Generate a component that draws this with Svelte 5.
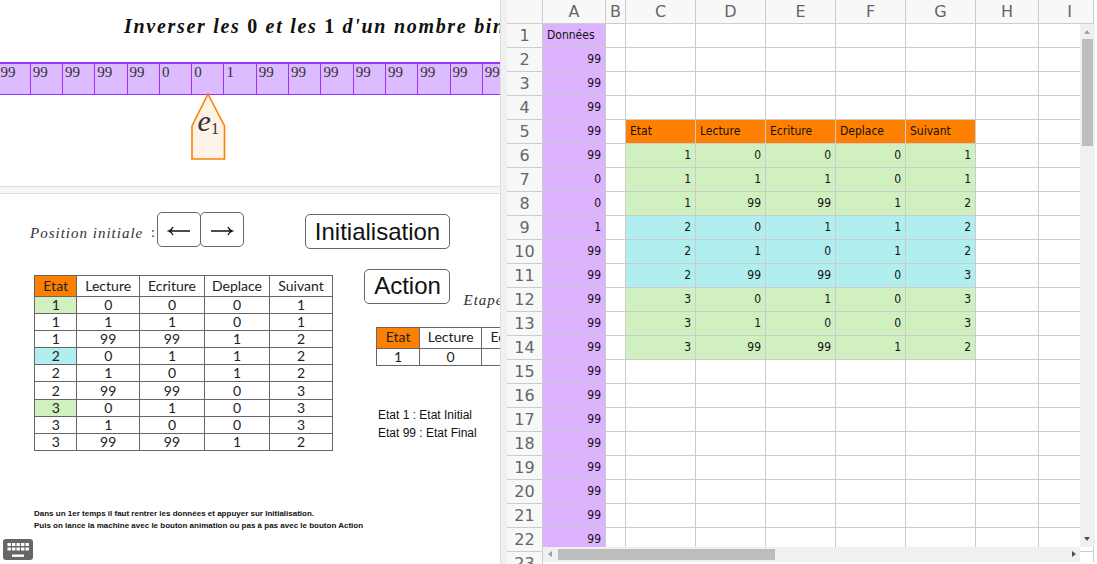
<script>
  const tape = ['99','99','99','99','99','0','0','1','99','99','99','99','99','99','99','99'];

  const transitions = [
    [1, 0, 0, 0, 1],
    [1, 1, 1, 0, 1],
    [1, 99, 99, 1, 2],
    [2, 0, 1, 1, 2],
    [2, 1, 0, 1, 2],
    [2, 99, 99, 0, 3],
    [3, 0, 1, 0, 3],
    [3, 1, 0, 0, 3],
    [3, 99, 99, 1, 2]
  ];
  const headers = ['Etat', 'Lecture', 'Ecriture', 'Deplace', 'Suivant'];
  const stateMark = { 0: 'green', 3: 'blue', 6: 'green' };

  const columns = ['A', 'B', 'C', 'D', 'E', 'F', 'G', 'H', 'I'];
  const rows = Array.from({ length: 23 }, (_, i) => i + 1);

  function cell(row, col) {
    if (col === 0) {
      if (row === 1) return { text: 'Données', cls: 'purple' };
      return { text: row <= 22 ? String(tape[row - 2] ?? 99) : '', cls: 'purple num' };
    }
    if (col >= 2 && col <= 6) {
      if (row === 5) return { text: headers[col - 2], cls: 'orange' };
      if (row >= 6 && row <= 14) {
        const tint = row <= 8 || row >= 12 ? 'green' : 'blue';
        return { text: String(transitions[row - 6][col - 2]), cls: tint + ' num' };
      }
    }
    return { text: '', cls: '' };
  }
</script>

<div class="app">
  <div class="geo">
    <div class="top">
      <h1 class="title"><i>Inverser les&nbsp;</i><b>0</b><i>&nbsp;et les&nbsp;</i><b>1</b><i>&nbsp;d'un nombre binaire</i></h1>
      <div class="tape">
        {#each tape as v}
          <div class="square">{v}</div>
        {/each}
      </div>
      <svg class="head" width="38" height="69" viewBox="0 0 38 69">
        <polygon points="19,1 35.5,33 35.5,66 3,66 3,33" fill="#fff2e6" stroke="#ff8000" stroke-width="1.6" />
        <text x="8.5" y="38" class="head-e">e</text>
        <text x="22" y="41" class="head-sub">1</text>
      </svg>
    </div>
    <div class="bar"></div>
    <div class="bottom">
      <div class="controls">
        <span class="pos">Position initiale</span>
        <span class="colon">:</span>
        <div class="arrows">
          <button class="btn arrow" aria-label="gauche">
            <svg width="24" height="12" viewBox="0 0 24 12"><path d="M1.5 6H23M6 2Q5 4.8 1.5 6Q5 7.2 6 10" /></svg>
          </button>
          <button class="btn arrow" aria-label="droite">
            <svg width="24" height="12" viewBox="0 0 24 12"><path d="M1 6H22.5M18 2Q19 4.8 22.5 6Q19 7.2 18 10" /></svg>
          </button>
        </div>
        <button class="btn big init">Initialisation</button>
      </div>

      <div class="middle">
        <table class="rules">
          <colgroup>
            <col style="width:42.4px" /><col style="width:62.6px" /><col style="width:65px" /><col style="width:65px" /><col style="width:63px" />
          </colgroup>
          <thead>
            <tr>
              {#each headers as h, i}
                <th class:orange={i === 0}>{h}</th>
              {/each}
            </tr>
          </thead>
          <tbody>
            {#each transitions as t, r}
              <tr>
                {#each t as v, c}
                  <td class={c === 0 && stateMark[r] ? stateMark[r] : ''}>{v}</td>
                {/each}
              </tr>
            {/each}
          </tbody>
        </table>

        <div class="side">
          <div class="action-row">
            <button class="btn big action">Action</button>
            <span class="etape">Etape</span>
          </div>
          <table class="rules current">
            <colgroup>
              <col style="width:42.4px" /><col style="width:62.6px" /><col style="width:65px" /><col style="width:65px" /><col style="width:63px" />
            </colgroup>
            <thead>
              <tr>
                {#each headers as h, i}
                  <th class:orange={i === 0}>{h}</th>
                {/each}
              </tr>
            </thead>
            <tbody>
              <tr><td>1</td><td>0</td><td></td><td></td><td></td></tr>
            </tbody>
          </table>
          <p class="legend">Etat 1 : Etat Initial</p>
          <p class="legend">Etat 99 : Etat Final</p>
        </div>
      </div>

      <div class="notes">
        <p>Dans un 1er temps il faut rentrer les données et appuyer sur Initialisation.</p>
        <p>Puis on lance la machine avec le bouton animation ou pas à pas avec le bouton Action</p>
      </div>
    </div>

    <div class="keyboard">
      <svg width="30" height="21" viewBox="0 0 30 21">
        <g fill="#fff">
          {#each [0, 1, 2, 3, 4] as k}
            <rect x={4.5 + k * 4.5} y="4" width="3.4" height="3" />
            <rect x={4.5 + k * 4.5} y="8.5" width="3.4" height="3" />
          {/each}
          <rect x="9" y="15.5" width="12" height="2.4" />
        </g>
      </svg>
    </div>
  </div>

  <div class="split"></div>

  <div class="sheet">
    <div class="grid">
      <div class="corner"></div>
      {#each columns as c}
        <div class="colhead" class:last={c === 'I'}>{c}</div>
      {/each}
      {#each rows as r}
        <div class="rowhead">{r}</div>
        {#each columns as _, c}
          {@const info = cell(r, c)}
          <div class="c {info.cls}">{info.text}</div>
        {/each}
      {/each}
    </div>

    <div class="vscroll">
      <span class="tri up"></span>
      <div class="vthumb"></div>
      <span class="tri down"></span>
    </div>
    <div class="hscroll">
      <span class="tri left"></span>
      <div class="hthumb"></div>
      <span class="tri right"></span>
    </div>
    <div class="bottom-mask"></div>
  </div>
</div>

<style>
  :global(body) {
    margin: 0;
    background: #fff;
  }
  .app {
    display: flex;
    width: 1097px;
    height: 564px;
    overflow: hidden;
    background: #fff;
  }

  /* graphics views */
  .geo {
    position: relative;
    width: 500px;
    flex: none;
    overflow: hidden;
  }
  .top {
    height: 186px;
    overflow: hidden;
  }
  .title {
    margin: 0;
    padding: 15px 0 0 124px;
    height: 47px;
    box-sizing: border-box;
    white-space: nowrap;
    font: 20px/22px "Liberation Serif", serif;
    letter-spacing: 1.7px;
    color: #111;
  }
  .title i {
    font-weight: bold;
  }
  .tape {
    display: grid;
    grid-template-columns: repeat(16, 32.3px);
    margin: 15px 0 0 -1.6px;
    height: 33px;
    width: 520px;
    background: #ddbbff;
    border-top: 2px solid #9933ff;
    border-bottom: 1px solid #9933ff;
    box-sizing: border-box;
  }
  .square {
    border-right: 1px solid #9933ff;
    padding: 0 0 0 2px;
    font: 15px/16px "Liberation Serif", serif;
    color: #333;
  }
  .head {
    display: block;
    margin: -2px 0 0 189px;
  }
  .head-e {
    font: italic 30px "Liberation Serif", serif;
    fill: #333;
  }
  .head-sub {
    font: 16px "Liberation Serif", serif;
    fill: #333;
  }
  .bar {
    height: 8px;
    box-sizing: border-box;
    background: #f6f6f6;
    border-top: 1px solid #ddd;
    border-bottom: 1px solid #ddd;
  }
  .bottom {
    padding-top: 18px;
  }
  .controls {
    display: flex;
    align-items: flex-start;
    height: 37px;
    padding-left: 30px;
  }
  .pos {
    margin-top: 13px;
    width: 121px;
    font: italic 15px/16px "Liberation Serif", serif;
    letter-spacing: 1px;
    color: #333;
    white-space: nowrap;
  }
  .colon {
    margin-top: 13px;
    width: 6px;
    font: 14px/16px "Liberation Serif", serif;
    color: #333;
  }
  .arrows {
    display: flex;
  }
  .btn {
    box-sizing: border-box;
    margin: 0;
    padding: 0;
    background: #fff;
    border: 1.5px solid #666;
    border-radius: 5px;
    color: #111;
    font-family: "Liberation Sans", sans-serif;
  }
  .arrow {
    display: flex;
    align-items: center;
    justify-content: center;
    width: 44px;
    height: 35px;
    padding-top: 2px;
  }
  .arrow svg {
    display: block;
    fill: none;
    stroke: #111;
    stroke-width: 1.3;
  }
  .arrow + .arrow {
    margin-left: -1px;
  }
  .big {
    font-size: 24px;
    line-height: 30px;
  }
  .init {
    width: 145px;
    height: 35px;
    margin: 2px 0 0 61px;
  }
  .middle {
    display: flex;
    align-items: flex-start;
    margin-top: 19.5px;
    padding-left: 34px;
  }
  table.rules {
    flex: none;
    margin-top: 6.5px;
    width: 298px;
    table-layout: fixed;
    border-collapse: collapse;
    font: 14px/15px "Lato", sans-serif;
    color: #222;
    background: #fff;
  }
  .rules th,
  .rules td {
    border: 1px solid #666;
    padding: 0 0 1px;
    text-align: center;
    font-weight: normal;
  }
  .rules th {
    height: 18px;
    padding-bottom: 2px;
  }
  .rules td {
    height: 15.1px;
  }
  .rules th.orange {
    background: #ff8000;
  }
  .rules td.green {
    background: #d0f0c0;
  }
  .rules td.blue {
    background: #b0eef0;
  }
  .side {
    flex: none;
    width: 300px;
    margin-left: 31.5px;
  }
  .action-row {
    display: flex;
    height: 35px;
  }
  .action {
    width: 86px;
    height: 35px;
  }
  .etape {
    margin: 23px 0 0 13px;
    font: italic 15px/16px "Liberation Serif", serif;
    letter-spacing: 1px;
    color: #333;
  }
  table.current {
    margin: 23px 0 0 12px;
  }
  .legend {
    margin: 0 0 0 13.5px;
    font: 12px/18px "Liberation Sans", sans-serif;
    color: #111;
  }
  .current + .legend {
    margin-top: 40px;
  }
  .notes {
    margin: 57px 0 0 34px;
    font: bold 8px/12px "Liberation Sans", sans-serif;
    color: #111;
  }
  .notes p {
    margin: 0;
  }
  .keyboard {
    position: absolute;
    left: 3px;
    top: 539px;
    width: 30px;
    height: 21px;
    background: #666;
    border-radius: 3px;
  }
  .keyboard svg {
    display: block;
  }

  .split {
    width: 7px;
    flex: none;
    box-sizing: border-box;
    background: #f0f0f0;
    border-left: 1px solid #ddd;
  }

  /* spreadsheet */
  .sheet {
    position: relative;
    flex: 1;
    overflow: hidden;
  }
  .grid {
    display: grid;
    grid-template-columns: 36px 63px 20px repeat(5, 70px) 63px 55px;
    grid-auto-rows: 24px;
    font: 12px/23px "DejaVu Sans Condensed", "DejaVu Sans", sans-serif;
    color: #111;
  }
  .corner,
  .colhead,
  .rowhead {
    box-sizing: border-box;
    background: #f8f8f8;
    border-right: 1px solid #ccc;
    border-bottom: 1px solid #ccc;
    color: #666;
    text-align: center;
    font-family: "DejaVu Sans", sans-serif;
    font-size: 16px;
  }
  .colhead.last {
    padding-left: 7px;
  }
  .c {
    box-sizing: border-box;
    border-right: 1px solid #ccc;
    border-bottom: 1px solid #ccc;
    padding: 0 4px;
    overflow: hidden;
    white-space: nowrap;
  }
  .num {
    text-align: right;
  }
  .purple {
    background: #ddb3ff;
  }
  .orange {
    background: #ff8000;
  }
  .green {
    background: #d0f0c0;
  }
  .blue {
    background: #b0eef0;
  }
  .vscroll {
    position: absolute;
    left: 573px;
    top: 24px;
    width: 15px;
    height: 523px;
    background: #f0f0f0;
  }
  .vthumb {
    position: absolute;
    left: 2px;
    top: 15px;
    width: 11px;
    height: 107px;
    background: #bdbdbd;
  }
  .hscroll {
    position: absolute;
    left: 36px;
    top: 547px;
    width: 537px;
    height: 15px;
    background: #f0f0f0;
  }
  .hthumb {
    position: absolute;
    left: 15px;
    top: 2px;
    width: 217px;
    height: 11px;
    background: #bdbdbd;
  }
  .bottom-mask {
    position: absolute;
    left: 36px;
    top: 562px;
    width: 554px;
    height: 2px;
    background: #fff;
  }
  .tri {
    position: absolute;
    width: 0;
    height: 0;
    border-style: solid;
    border-color: transparent;
  }
  .tri.up {
    left: 4px;
    top: 6px;
    border-width: 0 3.5px 4px;
    border-bottom-color: #a0a0a0;
  }
  .tri.down {
    left: 4px;
    bottom: 6px;
    border-width: 4px 3.5px 0;
    border-top-color: #505050;
  }
  .tri.left {
    left: 5px;
    top: 4px;
    border-width: 3.5px 4px 3.5px 0;
    border-right-color: #a0a0a0;
  }
  .tri.right {
    right: 4px;
    top: 4px;
    border-width: 3.5px 0 3.5px 4px;
    border-left-color: #505050;
  }
</style>
